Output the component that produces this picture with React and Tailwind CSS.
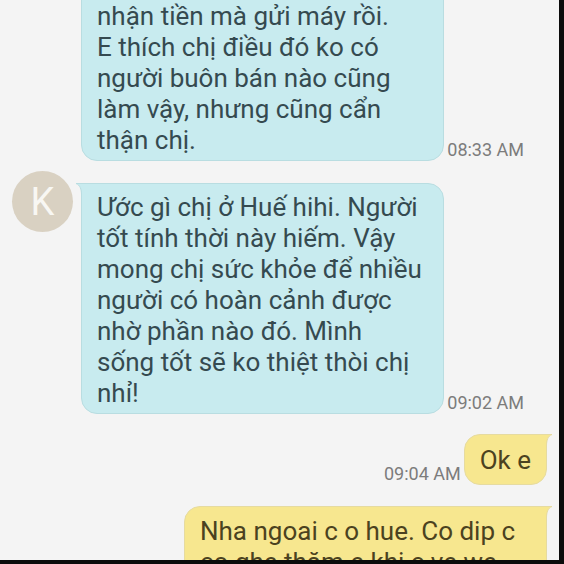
const messages = [
  {
    id: 1,
    from: "them",
    time: "08:33 AM",
    text: "Chưa tới chị\nnhận tiền mà gửi máy rồi.\nE thích chị điều đó ko có\nngười buôn bán nào cũng\nlàm vậy, nhưng cũng cẩn\nthận chị.",
  },
  {
    id: 2,
    from: "them",
    time: "09:02 AM",
    avatar: "K",
    text: "Ước gì chị ở Huế hihi. Người\ntốt tính thời này hiếm. Vậy\nmong chị sức khỏe để nhiều\nngười có hoàn cảnh được\nnhờ phần nào đó. Mình\nsống tốt sẽ ko thiệt thòi chị\nnhỉ!",
  },
  { id: 3, from: "me", time: "09:04 AM", text: "Ok e" },
  { id: 4, from: "me", text: "Nha ngoai c o hue. Co dip c\nco ghe thăm e khi c ve we" },
];

function Time({ children }) {
  return <time className="shrink-0 text-[18px] leading-[22px] text-[#7c7c7c]">{children}</time>;
}

function Incoming({ message }) {
  return (
    <li className="flex items-start pl-3">
      <div className="mr-2 w-[61px] shrink-0">
        {message.avatar && (
          <div className="flex h-[61px] w-[61px] items-center justify-center rounded-full bg-[#d9d1c2] text-[38px] leading-none text-[#f8f7f3]">
            {message.avatar}
          </div>
        )}
      </div>
      <div className="mt-3 flex flex-1 items-end gap-[3px]">
        <div className="relative w-[76%] rounded-[16px] rounded-tl-none border border-[#b9dde1] bg-[#c8ebef] pt-2 pb-1 pl-[15px] text-[#354a50]">
          {message.avatar && (
            <svg className="absolute -top-px -left-[6px] h-3 w-[7px]" viewBox="0 0 7 12">
              <path d="M0 0H7V12H5.5C5.5 6 4 2 0 0Z" fill="#c8ebef" />
              <path d="M7 .5H0C4 2 5.5 6 5.5 12" fill="none" stroke="#b9dde1" />
            </svg>
          )}
          <p className="whitespace-pre-line text-[26px] leading-[31px]">{message.text}</p>
        </div>
        <Time>{message.time}</Time>
      </div>
    </li>
  );
}

function Outgoing({ message }) {
  return (
    <li className="flex items-end justify-end gap-[3px] pr-3">
      {message.time && <Time>{message.time}</Time>}
      <div
        className={`relative rounded-[16px] rounded-tr-none border border-[#e6dba0] bg-[#f7e78f] pr-[15px] pb-2 pl-[15px] text-[#4b4220] ${
          message.time ? "pt-[10px]" : "w-[363px] max-w-full pt-[9px]"
        }`}
      >
        <svg className="absolute -top-px -right-[6px] h-3 w-[7px]" viewBox="0 0 7 12">
          <path d="M7 0H0V12H1.5C1.5 6 3 2 7 0Z" fill="#f7e78f" />
          <path d="M0 .5H7C3 2 1.5 6 1.5 12" fill="none" stroke="#e6dba0" />
        </svg>
        <p className="whitespace-pre-line text-[26px] leading-[31px]">{message.text}</p>
      </div>
    </li>
  );
}

export default function App() {
  return (
    <main className="h-screen overflow-hidden border-r-[5px] border-b-4 border-[#0b0b0b] bg-[#f4f4f4] font-['Roboto',sans-serif]">
      <ul className="-mt-[51px] flex flex-col gap-[10px]">
        <Incoming message={messages[0]} />
        <Incoming message={messages[1]} />
      </ul>
      <ul className="mt-5 flex flex-col gap-[21px]">
        <Outgoing message={messages[2]} />
        <Outgoing message={messages[3]} />
      </ul>
    </main>
  );
}
